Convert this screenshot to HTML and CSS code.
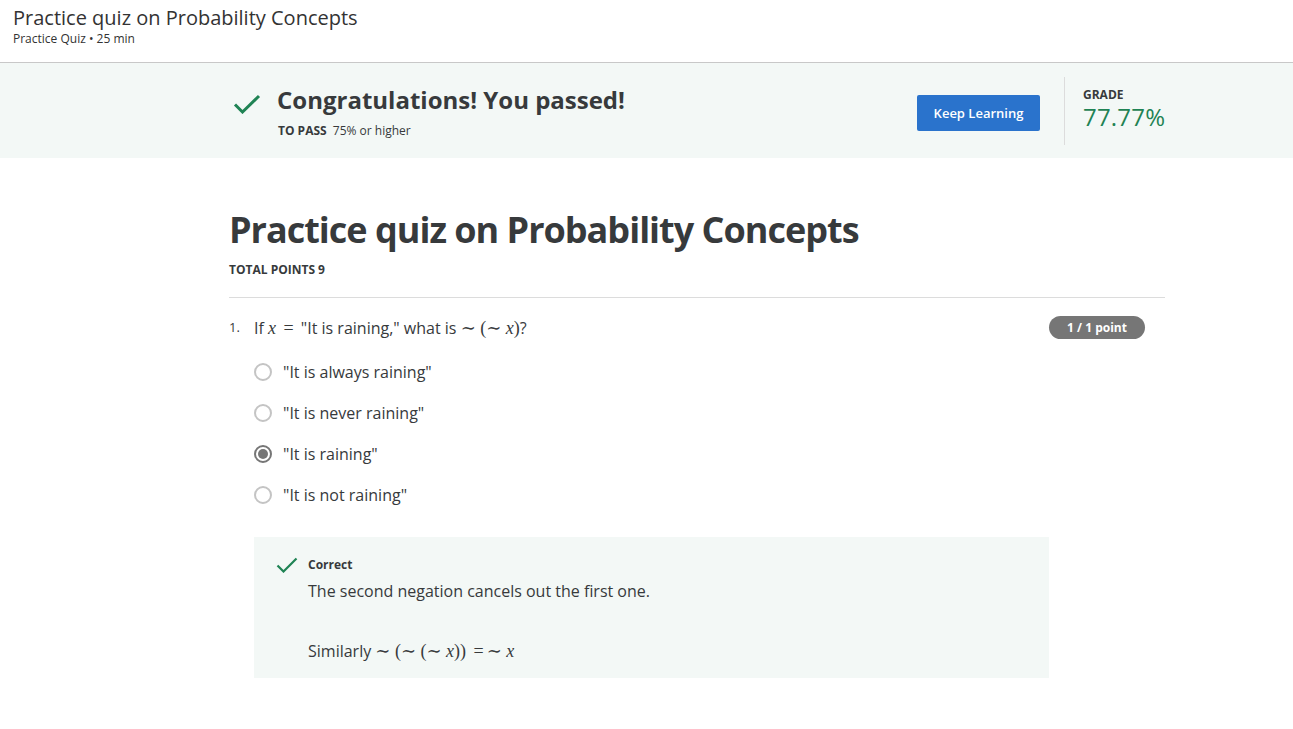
FILE: index.html
```html
<!DOCTYPE html>
<html>
<head>
<meta charset="utf-8">
<link rel="stylesheet" href="styles.css">
</head>
<body>
<header class="top">
  <div class="top-title">Practice quiz on Probability Concepts</div>
  <div class="top-sub">Practice Quiz • 25 min</div>
</header>
<section class="banner">
  <div class="banner-inner">
    <svg class="check-big" viewBox="0 0 28 20" width="28" height="20"><path d="M2 10.5 L9.5 18 L26 2" fill="none" stroke="#1f8354" stroke-width="3"/></svg>
    <div class="pass-block">
      <div class="pass-title">Congratulations! You passed!</div>
      <div class="pass-sub"><b>TO PASS</b> 75% or higher</div>
    </div>
    <button class="keep">Keep Learning</button>
    <div class="divider"></div>
    <div class="grade">
      <div class="grade-label">GRADE</div>
      <div class="grade-value">77.77%</div>
    </div>
  </div>
</section>
<main class="main">
  <h1 class="quiz-title">Practice quiz on Probability Concepts</h1>
  <div class="total">TOTAL POINTS 9</div>
  <hr class="rule">
  <div class="question">
    <div class="q-head">
      <span class="q-num">1.</span>
      <span class="q-text">If <span class="m"><i>x</i> <span class="op">=</span></span> "It is raining," what is <span class="m">∼ (∼ <i>x</i>)</span>?</span>
      <span class="badge">1 / 1 point</span>
    </div>
    <ul class="options">
      <li class="opt"><span class="radio"></span>"It is always raining"</li>
      <li class="opt"><span class="radio"></span>"It is never raining"</li>
      <li class="opt"><span class="radio checked"></span>"It is raining"</li>
      <li class="opt"><span class="radio"></span>"It is not raining"</li>
    </ul>
    <div class="feedback">
      <svg class="check-small" viewBox="0 0 22 16" width="22" height="16"><path d="M1.5 8.5 L7.5 14.5 L20.5 1.5" fill="none" stroke="#1f8354" stroke-width="2.2"/></svg>
      <div class="fb-body">
        <div class="fb-label">Correct</div>
        <p class="fb-text">The second negation cancels out the first one.</p>
        <p class="fb-text fb-gap">Similarly <span class="m">∼ (∼ (∼ <i>x</i>)) <span class="op">=</span>∼ <i>x</i></span></p>
      </div>
    </div>
  </div>
</main>
</body>
</html>
```
FILE: styles.css
```css
* { box-sizing: border-box; }
body {
  margin: 0;
  font-family: "Open Sans", "Noto Sans", sans-serif;
  color: #373a3c;
  background: #fff;
}
.top {
  height: 63px;
  padding: 5px 13px 0;
  border-bottom: 1px solid #c8c8c8;
}
.top-title {
  font-size: 20px;
  line-height: 26px;
  color: #333;
}
.top-sub {
  font-size: 12px;
  line-height: 16px;
  color: #333;
}
.banner {
  background: #f3f8f6;
  height: 95px;
}
.banner-inner {
  width: 936px;
  margin-left: 229px;
  height: 100%;
  display: flex;
  align-items: center;
}
.check-big {
  margin-left: 4px;
  margin-top: -14px;
  flex: none;
}
.pass-block {
  margin-left: 16px;
  margin-top: 2px;
}
.pass-title {
  font-size: 24px;
  font-weight: 700;
  line-height: 32px;
  color: #373a3c;
}
.pass-sub {
  font-size: 12px;
  line-height: 16px;
  margin-top: 7px;
  margin-left: 1px;
}
.pass-sub b { margin-right: 3px; }
.keep {
  margin-left: auto;
  margin-top: 5px;
  width: 123px;
  height: 36px;
  background: #2a73cc;
  border: none;
  border-radius: 2px;
  color: #fff;
  font-family: "Open Sans", sans-serif;
  font-size: 13px;
  font-weight: 600;
  padding: 0;
}
.divider {
  width: 1px;
  height: 68px;
  background: #dcdcdc;
  margin-left: 24px;
  margin-top: 1px;
}
.grade {
  width: 100px;
  padding-left: 18px;
  margin-top: -3px;
}
.grade-label {
  font-size: 12px;
  font-weight: 700;
  line-height: 16px;
}
.grade-value {
  font-size: 24px;
  line-height: 28px;
  color: #1f8354;
  letter-spacing: 0.2px;
}
.main {
  width: 936px;
  margin-left: 229px;
  padding-top: 49px;
}
.quiz-title {
  margin: 0;
  font-size: 36px;
  line-height: 46px;
  font-weight: 700;
  letter-spacing: -1px;
  color: #373a3c;
}
.total {
  margin-top: 9px;
  font-size: 12px;
  font-weight: 700;
  line-height: 16px;
}
.rule {
  margin: 19px 0 0;
  border: none;
  border-top: 1px solid #dcdcdc;
}
.question { padding-top: 18px; }
.q-head {
  display: flex;
  align-items: center;
  height: 24px;
}
.q-num {
  width: 25px;
  font-size: 13px;
  margin-top: -3px;
}
.q-text {
  font-size: 16px;
  line-height: 24px;
}
.m {
  font-family: "Liberation Serif", "DejaVu Serif", serif;
  font-size: 18px;
}
.m i { font-style: italic; }
.op { margin: 0 3px; }
.badge {
  margin-left: auto;
  margin-right: 20px;
  width: 96px;
  height: 23px;
  border-radius: 12px;
  background: #767676;
  color: #fff;
  font-size: 12px;
  font-weight: 700;
  line-height: 23px;
  text-align: center;
  margin-top: -1px;
}
.options {
  list-style: none;
  margin: 11px 0 0 25px;
  padding: 0;
}
.opt {
  display: flex;
  align-items: center;
  height: 41px;
  font-size: 16px;
}
.radio {
  width: 18px;
  height: 18px;
  border: 2px solid #c4c4c4;
  border-radius: 50%;
  margin-right: 11px;
  flex: none;
  display: flex;
  align-items: center;
  justify-content: center;
}
.radio.checked { border-color: #767676; }
.radio.checked::after {
  content: "";
  width: 10px;
  height: 10px;
  border-radius: 50%;
  background: #767676;
}
.feedback {
  margin: 22px 0 0 25px;
  width: 795px;
  height: 141px;
  background: #f3f8f6;
  display: flex;
  padding: 20px 0 0 22px;
}
.check-small { flex: none; }
.fb-body { margin-left: 10px; margin-top: 0; }
.fb-label {
  font-size: 12px;
  font-weight: 700;
  line-height: 16px;
}
.fb-text {
  margin: 6px 0 0;
  font-size: 16px;
  line-height: 24px;
}
.fb-gap { margin-top: 36px; }
```
